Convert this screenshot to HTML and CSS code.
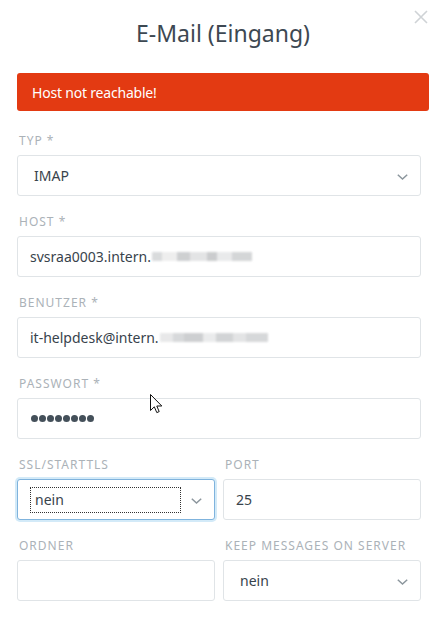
FILE: index.html
```html
<!DOCTYPE html>
<html lang="de">
<head>
<meta charset="utf-8">
<title>E-Mail (Eingang)</title>
<link rel="stylesheet" href="styles.css">
</head>
<body>
<div class="modal">
  <header class="modal-header">
    <h1 class="modal-title">E-Mail (Eingang)</h1>
    <svg class="close" width="14" height="14" viewBox="0 0 14 14"><path d="M1 1L13 13M13 1L1 13" stroke="#cfd3d6" stroke-width="1.6" fill="none"/></svg>
  </header>
  <div class="alert">Host not reachable!</div>
  <form class="form">
    <div class="group">
      <label class="label">Typ *</label>
      <div class="control select"><span class="value">IMAP</span><svg class="chev" width="11" height="6" viewBox="0 0 11 6"><path d="M0.8 0.8L5.5 5L10.2 0.8" stroke="#8c969d" stroke-width="1.5" fill="none"/></svg></div>
    </div>
    <div class="group">
      <label class="label">Host *</label>
      <div class="control"><span class="value">svsraa0003.intern.</span><span class="blur b1"></span></div>
    </div>
    <div class="group">
      <label class="label">Benutzer *</label>
      <div class="control"><span class="value">it-helpdesk@intern.</span><span class="blur b2"></span></div>
    </div>
    <div class="group">
      <label class="label">Passwort *</label>
      <div class="control"><span class="dots"><i></i><i></i><i></i><i></i><i></i><i></i><i></i><i></i></span></div>
    </div>
    <div class="row">
      <div class="group">
        <label class="label">SSL/STARTTLS</label>
        <div class="control select focus"><span class="ring">nein</span><svg class="chev" width="11" height="6" viewBox="0 0 11 6"><path d="M0.8 0.8L5.5 5L10.2 0.8" stroke="#8c969d" stroke-width="1.5" fill="none"/></svg></div>
      </div>
      <div class="group">
        <label class="label">Port</label>
        <div class="control"><span class="value">25</span></div>
      </div>
    </div>
    <div class="row">
      <div class="group">
        <label class="label">Ordner</label>
        <div class="control"></div>
      </div>
      <div class="group">
        <label class="label">Keep messages on server</label>
        <div class="control select"><span class="value">nein</span><svg class="chev" width="11" height="6" viewBox="0 0 11 6"><path d="M0.8 0.8L5.5 5L10.2 0.8" stroke="#8c969d" stroke-width="1.5" fill="none"/></svg></div>
      </div>
    </div>
  </form>
  <svg class="cursor" width="13" height="20" viewBox="0 0 13 20"><path d="M0.5 0.5V16.5L4.3 12.8L6.8 18.6L9.2 17.6L6.8 12H11.8Z" fill="#fff" stroke="#111" stroke-width="1" stroke-linejoin="round"/></svg>
</div>
</body>
</html>
```

FILE: styles.css
```css
* { box-sizing: border-box; }
html, body { margin: 0; padding: 0; background: #fff; }
body { font-family: "Noto Sans", "Open Sans", sans-serif; color: #38434c; }

.modal { position: relative; width: 436px; height: 625px; padding: 0 7px 0 17px; }

.modal-header { position: relative; height: 73px; display: flex; justify-content: center; align-items: flex-start; }
.modal-title { margin: 16px 0 0 0; font-size: 23px; font-weight: 400; line-height: 34px; color: #3d4852; letter-spacing: 0; }
.close { position: absolute; right: 1px; top: 10px; }

.alert { height: 38px; background: #e33a12; color: #fff; border-radius: 3px; padding: 0 15px; display: flex; align-items: center; font-size: 14px; letter-spacing: -0.2px; }

.form { width: 404px; padding-top: 20px; display: flex; flex-direction: column; gap: 16px; }
.row { display: grid; grid-template-columns: 1fr 1fr; gap: 8px; }
.group { display: flex; flex-direction: column; gap: 4px; }
.label { display: block; height: 20px; line-height: 20px; padding-left: 2px; font-size: 12px; text-transform: uppercase; letter-spacing: 1px; color: #abb2b8; }

.control { position: relative; height: 41px; border: 1px solid #e0e4e7; border-radius: 3px; background: #fff; display: flex; align-items: center; padding: 0 12px; font-size: 14px; color: #38434c; }
.select { padding-left: 16px; }
.select .chev { position: absolute; right: 12px; top: 18px; }
.focus { border-color: #7fb3dd; box-shadow: 0 0 0 2px #d3eaf8; padding-left: 12px; }
.ring { border: 1px dotted #333; width: 151px; height: 26px; display: flex; align-items: center; padding-left: 4px; }

.blur { display: inline-block; height: 9px; margin-left: 1px; filter: blur(1.3px); opacity: 0.85; }
.b1 { width: 100px; background: linear-gradient(90deg, #d3d5d7 0 10%, #ececec 10% 25%, #c6c8ca 25% 38%, #dfe0e1 38% 55%, #c2c4c6 55% 65%, #e6e7e8 65% 80%, #cdcfd1 80% 100%); }
.b2 { width: 108px; background: linear-gradient(90deg, #e4e5e6 0 12%, #d1d3d5 12% 22%, #c5c7c9 22% 40%, #e7e8e9 40% 52%, #cbcdcf 52% 68%, #dfe0e1 68% 80%, #d0d2d4 80% 100%); }

.dots { display: flex; gap: 1px; margin-left: 1px; }
.dots i { display: block; width: 7px; height: 7px; border-radius: 50%; background: #44505a; }

.cursor { position: absolute; left: 150px; top: 394px; }
```
